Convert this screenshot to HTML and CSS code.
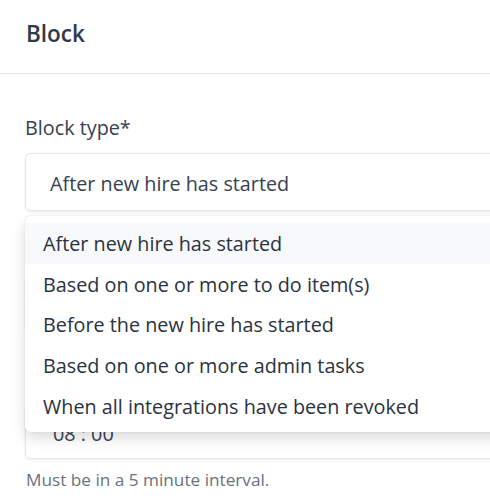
FILE: index.html
```html
<!DOCTYPE html>
<html lang="en">
<head>
<meta charset="utf-8">
<title>Block</title>
<link rel="stylesheet" href="styles.css">
</head>
<body>
<div class="modal">
  <header class="modal-header">
    <h2 class="modal-title">Block</h2>
  </header>
  <div class="modal-body">
    <div class="field field-select">
      <label class="field-label">Block type*</label>
      <div class="input">After new hire has started</div>
      <ul class="menu">
        <li class="menu-item active">After new hire has started</li>
        <li class="menu-item">Based on one or more to do item(s)</li>
        <li class="menu-item">Before the new hire has started</li>
        <li class="menu-item">Based on one or more admin tasks</li>
        <li class="menu-item">When all integrations have been revoked</li>
      </ul>
    </div>
    <div class="field">
      <label class="field-label">Days after new hire has started*</label>
      <div class="input">1</div>
    </div>
    <div class="field">
      <label class="field-label">Time*</label>
      <div class="input input-time">08 : 00</div>
      <p class="hint">Must be in a 5 minute interval.</p>
    </div>
  </div>
</div>
</body>
</html>
```
FILE: styles.css
```css
html, body {
  margin: 0;
  padding: 0;
  background: #ffffff;
  overflow: hidden;
}
body {
  font-family: "Open Sans", "Noto Sans", sans-serif;
  color: #374151;
}
.modal {
  width: 640px;
}
.modal-header {
  height: 73px;
  border-bottom: 1px solid #e5e7eb;
  padding: 0 26px;
  display: flex;
  align-items: center;
}
.modal-title {
  margin: 0 0 6px 0;
  font-size: 22.5px;
  font-weight: 600;
  color: #2f3a4c;
  line-height: 28px;
}
.modal-body {
  padding: 41px 0 0 25px;
  display: flex;
  flex-direction: column;
  gap: 28px;
}
.field {
  position: relative;
  display: flex;
  flex-direction: column;
}
.field-label {
  font-size: 19.8px;
  line-height: 26px;
  margin-bottom: 12px;
  color: #374151;
}
.input {
  height: 58px;
  box-sizing: border-box;
  border: 1px solid #e5e7eb;
  border-radius: 6px;
  box-shadow: 0 1px 3px rgba(0, 0, 0, 0.08);
  padding: 2px 24px 0;
  display: flex;
  align-items: center;
  font-size: 19.8px;
  color: #374151;
}
.input-time {
  padding-top: 6px;
  padding-left: 27px;
}
.hint {
  margin: 10px 0 0 1px;
  font-size: 17.2px;
  line-height: 22px;
  color: #6b7280;
}
.menu {
  position: absolute;
  top: 101px;
  left: 0;
  right: 0;
  margin: 0;
  padding: 7px 0 6px;
  list-style: none;
  background: #ffffff;
  border-radius: 6px;
  box-shadow: 0 6px 14px rgba(0, 0, 0, 0.14), 0 0 2px rgba(0, 0, 0, 0.08);
  z-index: 10;
}
.menu-item {
  height: 40.6px;
  box-sizing: border-box;
  padding: 1px 0 0 18px;
  display: flex;
  align-items: center;
  font-size: 19.8px;
  color: #2b3240;
}
.menu-item.active {
  background: #f8f9fb;
}
```
